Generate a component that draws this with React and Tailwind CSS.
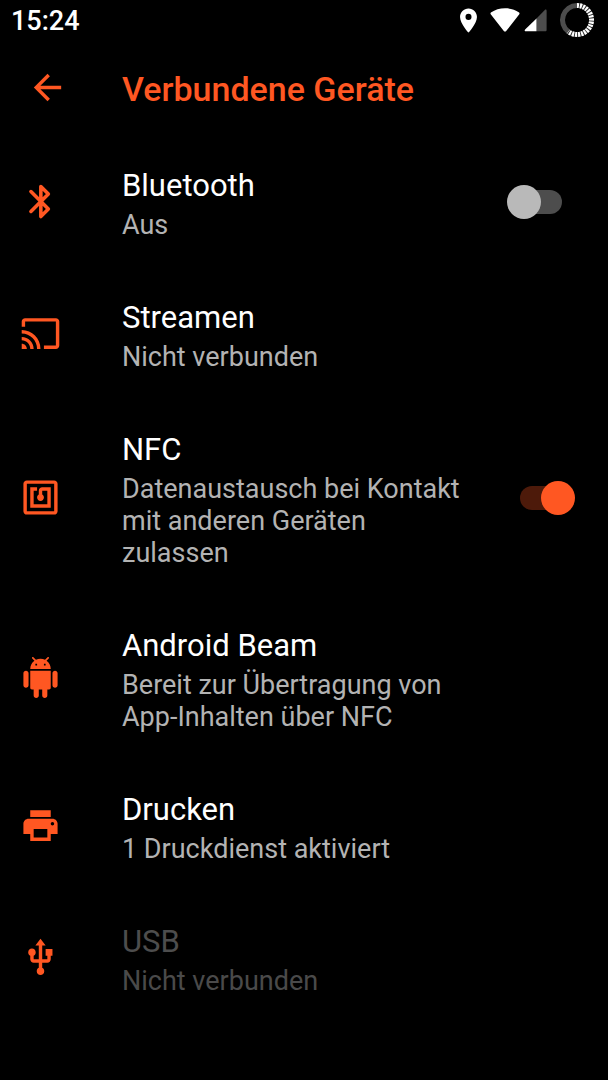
import { useState } from 'react';

const ICONS = {
  cast: 'M21 3H3c-1.1 0-2 .9-2 2v3h2V5h18v14h-7v2h7c1.1 0 2-.9 2-2V5c0-1.1-.9-2-2-2zM1 18v3h3c0-1.66-1.34-3-3-3zm0-4v2c2.76 0 5 2.24 5 5h2c0-3.87-3.13-7-7-7zm0-4v2c4.97 0 9 4.03 9 9h2c0-6.08-4.93-11-11-11z',
  nfc: 'M20 2H4c-1.1 0-2 .9-2 2v16c0 1.1.9 2 2 2h16c1.1 0 2-.9 2-2V4c0-1.1-.9-2-2-2zm0 18H4V4h16v16zM18 6h-5c-1.1 0-2 .9-2 2v2.28c-.6.35-1 .98-1 1.72 0 1.1.9 2 2 2s2-.9 2-2c0-.74-.4-1.38-1-1.72V8h3v8H8V8h2V6H6v12h12V6z',
  android: 'M6 18c0 .55.45 1 1 1h1v3.5c0 .83.67 1.5 1.5 1.5s1.5-.67 1.5-1.5V19h2v3.5c0 .83.67 1.5 1.5 1.5s1.5-.67 1.5-1.5V19h1c.55 0 1-.45 1-1V8H6v10zM3.5 8C2.67 8 2 8.67 2 9.5v7c0 .83.67 1.5 1.5 1.5S5 17.33 5 16.5v-7C5 8.67 4.33 8 3.5 8zm17 0c-.83 0-1.5.67-1.5 1.5v7c0 .83.67 1.5 1.5 1.5s1.5-.67 1.5-1.5v-7c0-.83-.67-1.5-1.5-1.5zm-4.97-5.84l1.3-1.3c.2-.2.2-.51 0-.71-.2-.2-.51-.2-.71 0l-1.48 1.48C13.85 1.23 12.95 1 12 1c-.96 0-1.86.23-2.66.63L7.85.15c-.2-.2-.51-.2-.71 0-.2.2-.2.51 0 .71l1.31 1.31C6.97 3.26 6 5.01 6 7h12c0-1.99-.97-3.75-2.47-4.84zM10 5H9V4h1v1zm5 0h-1V4h1v1z',
  print: 'M19 8H5c-1.66 0-3 1.34-3 3v6h4v4h12v-4h4v-6c0-1.66-1.34-3-3-3zm-3 11H8v-5h8v5zm3-7c-.55 0-1-.45-1-1s.45-1 1-1 1 .45 1 1-.45 1-1 1zm-1-9H6v4h12V3z',
  usb: 'M15 7v4h1v2h-3V5h2l-3-4-3 4h2v8H8v-2.07c.7-.37 1.2-1.08 1.2-1.93 0-1.21-.99-2.2-2.2-2.2-1.21 0-2.2.99-2.2 2.2 0 .85.5 1.56 1.2 1.93V13c0 1.11.89 2 2 2h3v3.05c-.71.37-1.2 1.1-1.2 1.95 0 1.22.99 2.2 2.2 2.2 1.21 0 2.2-.98 2.2-2.2 0-.85-.49-1.58-1.2-1.95V15h3c1.11 0 2-.89 2-2v-2h1V7h-4z',
};

const SETTINGS = [
  { id: 'bluetooth', title: 'Bluetooth', summary: 'Aus', toggle: true },
  { id: 'cast', title: 'Streamen', summary: 'Nicht verbunden' },
  { id: 'nfc', title: 'NFC', summary: 'Datenaustausch bei Kontakt mit anderen Geräten zulassen', toggle: true },
  { id: 'android', title: 'Android Beam', summary: 'Bereit zur Übertragung von App-Inhalten über NFC' },
  { id: 'print', title: 'Drucken', summary: '1 Druckdienst aktiviert' },
  { id: 'usb', title: 'USB', summary: 'Nicht verbunden', disabled: true },
];

const SettingIcon = ({ name }) => (
  <svg viewBox="0 0 24 24" className="size-[41px]" fill="currentColor" aria-hidden="true">
    {name === 'bluetooth' ? (
      <path
        d="M6.4 6.2 16.6 16.4 12.2 20.8V3.2L16.6 7.600 6.400 17.800"
        fill="none"
        stroke="currentColor"
        strokeWidth="2.1"
        strokeLinecap="round"
        strokeLinejoin="round"
      />
    ) : (
      <path d={ICONS[name]} />
    )}
  </svg>
);

const StatusBar = () => (
  <div className="flex h-[42px] items-start justify-between pl-[11px] pr-[13px] text-white">
    <span className="text-[27px] leading-[42px] font-medium">15:24</span>
    <div className="flex h-10 items-center">
      <svg width="29" height="29" viewBox="0 0 24 24" fill="currentColor" aria-hidden="true">
        <path d="M12 2C8.13 2 5 5.13 5 9c0 5.25 7 13 7 13s7-7.75 7-13c0-3.87-3.13-7-7-7zm0 9.5a2.5 2.5 0 0 1 0-5 2.5 2.5 0 0 1 0 5z" />
      </svg>
      <svg className="ml-[7px]" width="30" height="24" viewBox="0 0 30 24" fill="currentColor" aria-hidden="true">
        <path d="M15 23.6c-.5 0-.9-.2-1.2-.6L.7 6.2C.3 5.6.4 5 .9 4.6 5 1.7 9.8.3 15 .3s10 1.4 14.1 4.3c.5.4.6 1 .2 1.6L16.2 23c-.3.4-.7.6-1.2.6z" />
      </svg>
      <svg className="ml-1" width="23" height="24" viewBox="0 0 23 24" aria-hidden="true">
        <path d="M12.5 10.500 20.800 2c.8-.8 1.800-.4 1.800.7V22c0 .8-.5 1.300-1.300 1.300h-8.800z" fill="#4d4d4d" />
        <path d="M12.500 10.500v12.800H2c-1.400 0-1.800-1-.9-1.900z" fill="currentColor" />
      </svg>
      {/* Battery ring */}
      <svg className="ml-3" width="36" height="36" viewBox="0 0 36 36" fill="none" strokeWidth="5" aria-hidden="true">
        <path d="M9.200 29.500A14.500 14.500 0 0 1 18 3.500" stroke="#4d4d4d" />
        <path d="M18 3.500A14.500 14.500 0 1 1 9.200 29.500" stroke="#2b2b2b" />
        <path d="M18 3.500A14.500 14.500 0 1 1 9.200 29.500" stroke="currentColor" strokeDasharray="2.100 .9" />
      </svg>
    </div>
  </div>
);

const Setting = ({ setting, checked, onToggle }) => {
  const { id, title, summary, toggle, disabled } = setting;

  return (
    <li className="flex items-center pt-[27px] pb-[26px] pl-5 pr-[33px]">
      <span className="w-[102px] shrink-0 text-[#ff5722]">
        <SettingIcon name={id} />
      </span>
      <div className="min-w-0 flex-1 pt-[6px]">
        <label
          htmlFor={toggle ? id : undefined}
          className={`block text-[31px] leading-9 ${disabled ? 'text-[#4d4d4d]' : 'text-white'}`}
        >
          {title}
        </label>
        <p className={`mt-[5px] text-[27px] leading-8 ${disabled ? 'text-[#4a4a4a]' : 'text-[#b3b3b3]'}`}>{summary}</p>
      </div>
      <div className="ml-8 flex w-[68px] shrink-0">
        {toggle && (
          <input
            id={id}
            type="checkbox"
            role="switch"
            checked={checked}
            onChange={onToggle}
            className="relative h-[34px] w-full cursor-pointer appearance-none before:absolute before:inset-x-[13px] before:inset-y-[5px] before:rounded-full before:bg-[#4d4d4d] after:absolute after:top-0 after:left-0 after:size-[34px] after:rounded-full after:bg-[#b9b9b9] checked:before:bg-[#4d1a0a] checked:after:left-[34px] checked:after:bg-[#ff5722]"
          />
        )}
      </div>
    </li>
  );
};

const App = () => {
  const [enabled, setEnabled] = useState({ bluetooth: false, nfc: true });

  const handleToggle = (id) => setEnabled((prev) => ({ ...prev, [id]: !prev[id] }));

  return (
    <div className="min-h-screen bg-black font-['Roboto',sans-serif]">
      <StatusBar />

      <header className="flex h-[93px] items-center pl-[27px] text-[#ff5722]">
        <button type="button" aria-label="Zurück" className="mr-[54px] mb-[2px] cursor-pointer">
          <svg viewBox="0 0 24 24" className="size-[41px]" fill="currentColor" aria-hidden="true">
            <path d="M20 11H7.83l5.59-5.59L12 4l-8 8 8 8 1.41-1.41L7.83 13H20v-2z" />
          </svg>
        </button>
        <h1 className="text-[34px] leading-10 font-medium">Verbundene Geräte</h1>
      </header>

      <ul>
        {SETTINGS.map((setting) => (
          <Setting
            key={setting.id}
            setting={setting}
            checked={enabled[setting.id]}
            onToggle={() => handleToggle(setting.id)}
          />
        ))}
      </ul>
    </div>
  );
};

export default App;
